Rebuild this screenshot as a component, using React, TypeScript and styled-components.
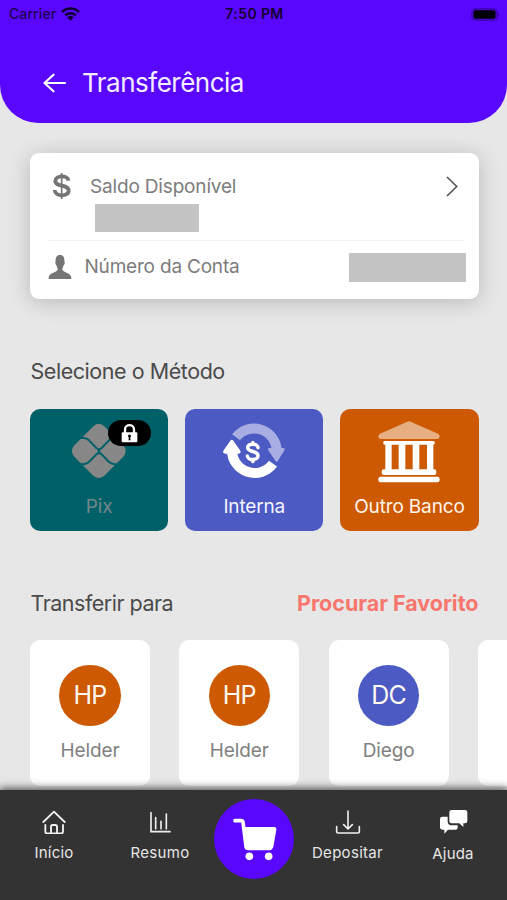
import React from "react";
import styled, { createGlobalStyle } from "styled-components";

const Global = createGlobalStyle`
  * { box-sizing: border-box; }
  html, body { margin: 0; padding: 0; }
  body { font-family: Inter, "Liberation Sans", sans-serif; background: #e7e7e7; overflow: hidden; }
  svg { display: block; flex: none; }
`;

const Screen = styled.div`
  width: 507px;
  height: 900px;
  display: flex;
  flex-direction: column;
  background: #e7e7e7;
  overflow: hidden;
`;

const Text = styled.span<{ $size: number; $color: string; $weight?: number; $track?: number }>`
  font-size: ${(p) => p.$size}px;
  line-height: 26px;
  font-weight: ${(p) => p.$weight ?? 400};
  color: ${(p) => p.$color};
  letter-spacing: ${(p) => p.$track ?? 0}px;
  white-space: nowrap;
`;

const Header = styled.header`
  height: 123px;
  flex: none;
  background: #5908fd;
  border-radius: 0 0 38px 38px;
`;

const StatusBar = styled.div`
  height: 28px;
  padding: 0 7px 0 9px;
  display: grid;
  grid-template-columns: 1fr auto 1fr;
  align-items: center;
`;

const StatusSide = styled.div<{ $end?: boolean }>`
  display: flex;
  align-items: center;
  gap: 5px;
  justify-content: ${(p) => (p.$end ? "flex-end" : "flex-start")};
`;

const TitleRow = styled.div`
  height: 109px;
  padding: 0 0 0 42px;
  display: flex;
  align-items: center;
  gap: 15px;
`;

const Content = styled.main`
  flex: 1;
  min-height: 0;
  padding: 29.5px 0 0 30px;
  display: flex;
  flex-direction: column;
`;

const AccountCard = styled.section`
  width: 448.5px;
  height: 146.5px;
  flex: none;
  background: #fff;
  border-radius: 9px;
  box-shadow: 0 3px 22px rgba(0, 0, 0, 0.2);
  padding: 20px 12.5px 0 18px;
`;

const BalanceRow = styled.div`
  height: 27px;
  display: flex;
  align-items: center;
  gap: 19px;
  padding-left: 4px;
  & > span { padding-top: 1px; }
  & > :last-child { margin-left: auto; margin-right: 8px; }
`;

const Redacted = styled.div<{ $w: number; $h: number }>`
  width: ${(p) => p.$w}px;
  height: ${(p) => p.$h}px;
  background: #c4c4c4;
`;

const BalanceValue = styled.div`
  padding: 4px 0 8.5px 47px;
`;

const AccountRow = styled.div`
  margin-right: 2.5px;
  border-top: 1.5px solid #f3f3f3;
  height: 54px;
  display: flex;
  align-items: center;
  gap: 12.5px;
  & > svg { margin-bottom: 2px; }
  & > span { padding-bottom: 2px; }
  & > :last-child { margin-left: auto; margin-right: -2.5px; }
`;

const SectionHead = styled.div<{ $top: number; $bottom: number }>`
  width: 448.5px;
  padding: ${(p) => p.$top}px 0 ${(p) => p.$bottom}px 0.5px;
  display: flex;
  justify-content: space-between;
  align-items: center;
`;

const Methods = styled.div`
  width: 448.5px;
  display: grid;
  grid-template-columns: repeat(3, 1fr);
  gap: 17px;
`;

const MethodTile = styled.button<{ $bg: string }>`
  position: relative;
  height: 122px;
  border: 0;
  border-radius: 10px;
  background: ${(p) => p.$bg};
  display: flex;
  flex-direction: column;
  align-items: center;
  justify-content: space-between;
  padding: 10px 0 11px;
  font-family: inherit;
`;

const LockBadge = styled.div`
  position: absolute;
  top: 11.5px;
  left: 78px;
  width: 43px;
  height: 26px;
  border-radius: 13px;
  background: #000;
  display: flex;
  align-items: center;
  justify-content: center;
`;

const Favorites = styled.div`
  display: flex;
  gap: 29.3px;
`;

const FavoriteCard = styled.div`
  width: 120px;
  height: 146px;
  flex: none;
  border-radius: 10px;
  background: #fff;
  display: flex;
  flex-direction: column;
  align-items: center;
  gap: 12px;
  padding-top: 24.5px;
`;

const Avatar = styled.div<{ $bg: string }>`
  width: 61.5px;
  height: 61.5px;
  border-radius: 50%;
  background: ${(p) => p.$bg};
  display: flex;
  align-items: center;
  justify-content: center;
`;

const TabBar = styled.nav`
  position: relative;
  height: 110px;
  flex: none;
  background: #333;
  box-shadow: 0 -1px 8px 1px rgba(0, 0, 0, 0.65);
  display: grid;
  grid-template-columns: 108px 104px 84px 103px 108px;
`;

const Tab = styled.div<{ $shift?: number }>`
  display: flex;
  flex-direction: column;
  align-items: center;
  gap: ${(p) => 6 + (p.$shift ?? 0)}px;
  padding-top: 18px;
`;

const CartButton = styled.div`
  width: 80px;
  height: 80px;
  margin: 9px auto 0;
  padding: 0 0 1px 1px;
  border-radius: 50%;
  background: #5908fd;
  display: flex;
  align-items: center;
  justify-content: center;
`;

const WifiIcon = () => (
  <svg width="19" height="14" viewBox="0 0 57 42">
    <g fill="none" stroke="#10002f" strokeWidth="7.5">
      <path d="M3 15.5C17 1 40 1 54 15.5" />
      <path d="M12.5 25C21 16.500 36 16.500 44.500 25" />
    </g>
    <path d="M28.500 41L18.500 31Q28.500 23 38.500 31Z" fill="#10002f" />
  </svg>
);

const BatteryIcon = () => (
  <svg width="29" height="13" viewBox="0 0 29 13">
    <rect x="0.700" y="0.700" width="25.600" height="11.600" rx="3.600" fill="#4a07d2" stroke="#3a05a8" />
    <rect x="2.500" y="2.200" width="22" height="8.600" rx="2" fill="#020007" />
    <path d="M27.300 4.500Q29 6.500 27.300 8.500Z" fill="#3a05a8" />
  </svg>
);

const BackIcon = () => (
  <svg width="25" height="20" viewBox="0 0 25 20" fill="none" stroke="#fff" strokeWidth="2.200" strokeLinecap="round" strokeLinejoin="round">
    <path d="M23 10H2.500M11.500 1.700L2.500 10L11.500 18.300" />
  </svg>
);

const DollarIcon = () => (
  <svg width="19" height="28" viewBox="0 0 57 84" fill="none" stroke="#757575">
    <path d="M49 26C48 9 10 9 10 27C10 46 50 36 50 56C50 75 9 75 8 54" strokeWidth="11.500" />
    <path d="M29 3V81" strokeWidth="5" />
  </svg>
);

const PersonIcon = () => (
  <svg width="24" height="26" viewBox="0 0 72 78" fill="#757575">
    <path d="M36 3C46 3 50 11 49 21C52 24 49 33 46 35C45 42 42 43 43 47C46 57 70 54 70 72V75H2V72C2 54 26 57 29 47C30 43 27 42 26 35C23 32 20 24 23 21C22 11 26 3 36 3Z" />
  </svg>
);

const ChevronIcon = () => (
  <svg width="12" height="21" viewBox="0 0 12 21" fill="none" stroke="#555" strokeWidth="1.600">
    <path d="M1 1L10.700 10.500L1 20" />
  </svg>
);

const PixIcon = () => (
  <svg width="56" height="61" viewBox="156 58 168 183">
    <path
      d="M224 79Q239 66 255 79L313 137Q327 154 313 171L256 228Q239 242 223 228L166 171Q151 154 166 137Z"
      fill="#878787"
    />
    <g fill="none" stroke="#006067" strokeWidth="6">
      <path d="M178 115H194Q205 115 213 125L232 145Q240 152 248 145L267 125Q275 115 286 115H302" />
      <path d="M178 194H194Q205 193 213 184L232 164Q240 157 248 164L267 184Q275 193 286 194H302" />
      <path d="M236 150L244 159M244 150L236 159" strokeWidth="4" />
    </g>
  </svg>
);

const LockIcon = () => (
  <svg width="17" height="19" viewBox="0 0 51 57">
    <path d="M12 27V17C12 -1 39 -1 39 17V27" fill="none" stroke="#fff" strokeWidth="7" />
    <rect x="2" y="25" width="47" height="30" rx="3" fill="#fff" />
    <circle cx="25.500" cy="36" r="4.500" fill="#000" />
    <path d="M24 37H27L28.500 49H22.500Z" fill="#000" />
  </svg>
);

const TransferIcon = () => (
  <svg width="62" height="64" viewBox="131 58 186 192">
    <path d="M170 113A68 68 0 0 1 292 154" fill="none" stroke="#a9aee2" strokeWidth="30" />
    <path d="M269 145H313Q318 147 315 152L296 183Q292 189 288 183L267 152Q264 147 269 145Z" fill="#a9aee2" />
    <path d="M158 151A68 68 0 0 0 281 192" fill="none" stroke="#fff" strokeWidth="30" />
    <path d="M137 162H179Q186 160 183 153L162 123Q157 117 153 123L132 153Q129 160 137 162Z" fill="#fff" />
    <g fill="none" stroke="#fff" strokeLinecap="round">
      <path d="M236 144C235 130 204 130 205 144C206 159 236 152 236 168C236 184 205 183 204 169" strokeWidth="10.500" />
      <path d="M220.500 128V134M220.500 180V186" strokeWidth="10" />
    </g>
  </svg>
);

const BankIcon = () => (
  <svg width="62" height="64" viewBox="132 56 186 192" fill="#fff">
    <path d="M218 65Q225 60 232 65L312 100Q317 103 317 109Q316 116 310 116H140Q134 116 133 109Q133 103 138 100Z" fill="#e7ae82" />
    <rect x="148" y="122" width="154" height="11" rx="4" />
    <path d="M154 128H173V212H154ZM194 128H214V212H194ZM236 128H256V212H236ZM279 128H298V212H279Z" />
    <rect x="143" y="207" width="164" height="17" rx="7" />
    <rect x="133" y="229" width="184" height="17" rx="7" />
  </svg>
);

const HomeIcon = () => (
  <svg width="26" height="26" viewBox="0 0 78 78" fill="none" stroke="#f2f2f2" strokeWidth="5.500" strokeLinecap="round" strokeLinejoin="round">
    <path d="M7 42L39 11L71 42M13 51V71Q13 76 18 76H60Q66 76 66 71V51M30 75V56Q30 51 35 51H43Q48 51 48 56V75" />
  </svg>
);

const ChartIcon = () => (
  <svg width="22" height="26" viewBox="0 0 66 78" fill="none" stroke="#eee" strokeWidth="5" strokeLinecap="round" strokeLinejoin="round">
    <path d="M6 14V71H63M20 29V62M36 40V62M52 18V62" />
  </svg>
);

const CartIcon = () => (
  <svg width="44" height="44" viewBox="0 0 132 132" fill="#fff">
    <path d="M6 11H26Q29 11 30 15L39 88Q40 94 46 94H112" fill="none" stroke="#fff" strokeWidth="11" strokeLinecap="round" />
    <path d="M33 30H125Q131 31 130 38L121 90Q119 97 112 98H48Q41 97 40 90Z" />
    <circle cx="49" cy="118" r="11.500" />
    <circle cx="107" cy="118" r="11.500" />
  </svg>
);

const DepositIcon = () => (
  <svg width="26" height="26" viewBox="0 0 78 78" fill="none" stroke="#f2f2f2" strokeWidth="4.800" strokeLinecap="round" strokeLinejoin="round">
    <path d="M39 9V61M26 50L39 63L52 50M5 56V72Q5 75 9 75H69Q73 75 73 72V56" />
  </svg>
);

const ChatIcon = () => (
  <svg width="29" height="26" viewBox="0 0 87 78" fill="#fff">
    <path d="M38 6H78Q85 6 85 13V39Q85 46 78 46H73V57L61 46H38Q31 46 31 39V13Q31 6 38 6Z" />
    <path d="M10 26H26V42Q27 51 36 52H56V60Q55 65 49 65H27L16 77V65H10Q3 65 3 58V33Q3 26 10 26Z" />
  </svg>
);

const favorites = [
  { initials: "HP", name: "Helder", color: "#cd5a02" },
  { initials: "HP", name: "Helder", color: "#cd5a02" },
  { initials: "DC", name: "Diego", color: "#4c5ac3" },
];

export default function App() {
  return (
    <Screen>
      <Global />
      <Header>
        <StatusBar>
          <StatusSide>
            <Text $size={14} $color="#1c0452" $weight={500} $track={0.1}>Carrier</Text>
            <WifiIcon />
          </StatusSide>
          <Text $size={14} $weight={600} $color="#12012f" $track={0.4}>7:50 PM</Text>
          <StatusSide $end>
            <BatteryIcon />
          </StatusSide>
        </StatusBar>
        <TitleRow>
          <BackIcon />
          <Text $size={26} $color="#f4edff" $track={-0.5}>Transferência</Text>
        </TitleRow>
      </Header>

      <Content>
        <AccountCard>
          <BalanceRow>
            <DollarIcon />
            <Text $size={19} $color="#7c7c7c" $track={-0.17}>Saldo Disponível</Text>
            <ChevronIcon />
          </BalanceRow>
          <BalanceValue>
            <Redacted $w={103.5} $h={28} />
          </BalanceValue>
          <AccountRow>
            <PersonIcon />
            <Text $size={19} $color="#7c7c7c" $track={-0.2}>Número da Conta</Text>
            <Redacted $w={117} $h={29} />
          </AccountRow>
        </AccountCard>

        <SectionHead $top={59} $bottom={24.5}>
          <Text $size={21.5} $color="#4b4b4b" $track={-0.45}>Selecione o Método</Text>
        </SectionHead>
        <Methods>
          <MethodTile $bg="#006067">
            <PixIcon />
            <Text $size={19} $color="#70878a" $track={-0.2}>Pix</Text>
            <LockBadge>
              <LockIcon />
            </LockBadge>
          </MethodTile>
          <MethodTile $bg="#4c5ac3">
            <TransferIcon />
            <Text $size={19} $color="#f5f5ff" $track={-0.15}>Interna</Text>
          </MethodTile>
          <MethodTile $bg="#cd5a02">
            <BankIcon />
            <Text $size={19} $color="#fff4ea" $track={-0.15}>Outro Banco</Text>
          </MethodTile>
        </Methods>

        <SectionHead $top={59.5} $bottom={24}>
          <Text $size={21.5} $color="#4b4b4b" $track={-0.5}>Transferir para</Text>
          <Text $size={21.5} $weight={700} $color="#f8766d" $track={-0.02}>Procurar Favorito</Text>
        </SectionHead>
        <Favorites>
          {favorites.map((f, i) => (
            <FavoriteCard key={i}>
              <Avatar $bg={f.color}>
                <Text $size={25} $color="#fff8f0" $track={-0.8}>{f.initials}</Text>
              </Avatar>
              <Text $size={19} $color="#808080" $track={-0.1}>{f.name}</Text>
            </FavoriteCard>
          ))}
          <FavoriteCard />
        </Favorites>
      </Content>

      <TabBar>
        <Tab>
          <HomeIcon />
          <Text $size={15} $color="#e6e6e6" $track={0.2}>Início</Text>
        </Tab>
        <Tab>
          <ChartIcon />
          <Text $size={15} $color="#e6e6e6" $track={0.3}>Resumo</Text>
        </Tab>
        <CartButton>
          <CartIcon />
        </CartButton>
        <Tab>
          <DepositIcon />
          <Text $size={15} $color="#e6e6e6" $track={0.3}>Depositar</Text>
        </Tab>
        <Tab $shift={1}>
          <ChatIcon />
          <Text $size={15} $color="#e6e6e6" $track={0.2}>Ajuda</Text>
        </Tab>
      </TabBar>
    </Screen>
  );
}
